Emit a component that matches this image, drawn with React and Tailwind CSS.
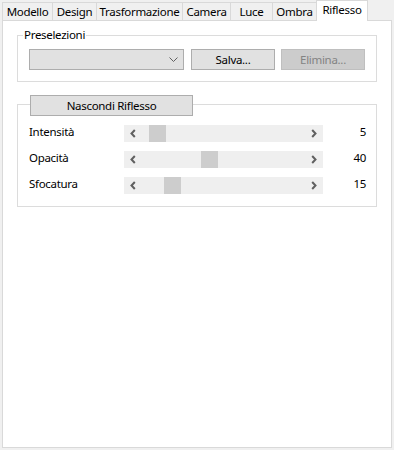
import React from "react";

const tabs = ["Modello", "Design", "Trasformazione", "Camera", "Luce", "Ombra", "Riflesso"];
const widths = ["w-[51px]", "w-[45px]", "w-[87px]", "w-[49px]", "w-[43px]", "w-[45px]", "w-[52px]"];

function Chev({ dir }) {
  return (
    <svg width="6" height="9" viewBox="0 0 6 9" className="shrink-0">
      {dir === "left" ? (
        <polyline points="4.8,1 1.5,4.5 4.8,8" fill="none" stroke="#606060" strokeWidth="2" />
      ) : (
        <polyline points="1.2,1 4.5,4.5 1.2,8" fill="none" stroke="#606060" strokeWidth="2" />
      )}
    </svg>
  );
}

function Slider({ pos }) {
  return (
    <div className="w-[199px] h-[17px] bg-[#efefef] flex items-center px-[6px] relative">
      <Chev dir="left" />
      <div className="flex-1" />
      <Chev dir="right" />
      <div className="absolute top-0 h-[17px] w-[17px] bg-[#cdcdcd]" style={{ left: pos }} />
    </div>
  );
}

export default function App() {
  const rows = [
    ["Intensità", 25, "5"],
    ["Opacità", 77, "40"],
    ["Sfocatura", 40, "15"],
  ];
  return (
    <div
      className="w-[394px] h-[450px] bg-[#f0f0f0] text-[11.5px] tracking-[-0.3px] text-black flex flex-col"
      style={{ fontFamily: '"Noto Sans", "Liberation Sans", sans-serif' }}
    >
      <div className="flex items-end h-[20px] pl-[2px]">
        {tabs.map((t, i) => {
          const sel = i === tabs.length - 1;
          return (
            <div
              key={t}
              className={
                (i > 0 ? "-ml-px " : "") +
                widths[i] +
                (sel
                  ? " h-[21px] -mb-px bg-white relative z-10 border border-b-0 border-[#d9d9d9] flex items-center justify-center pb-[3px]"
                  : " h-[18px] bg-[#f0f0f0] border border-b-0 border-[#d9d9d9] flex items-center justify-center")
              }
            >
              <span className="leading-[16px]">{t}</span>
            </div>
          );
        })}
      </div>
      <div className="mx-[2px] h-[428px] border border-[#d9d9d9] bg-white px-[14px] pt-[14px]">
        <div className="relative h-[47px] border border-[#dcdcdc] pl-[11px] pt-[13px] flex gap-[7px]">
          <div className="absolute -top-[9px] left-[5px] px-[1px] bg-white leading-[16px]">
            Preselezioni
          </div>
          <div className="w-[155px] h-[21px] bg-[#e1e1e1] border border-[#adadad] flex items-center justify-end pr-[5px]">
            <svg width="9" height="6" viewBox="0 0 9 6">
              <polyline points="0.5,0.5 4.5,4.5 8.5,0.5" fill="none" stroke="#606060" strokeWidth="1" />
            </svg>
          </div>
          <div className="w-[84px] h-[21px] bg-[#e1e1e1] border border-[#adadad] flex items-center justify-center leading-[16px]">
            Salva...
          </div>
          <div className="ml-[-1px] w-[84px] h-[21px] bg-[#cccccc] border border-[#bfbfbf] text-[#838383] flex items-center justify-center leading-[16px]">
            Elimina...
          </div>
        </div>
        <div className="relative mt-[22px] h-[103px] border border-[#dcdcdc] pt-[20px] flex flex-col gap-[9px]">
          <div className="absolute -top-[10px] left-[12px] w-[163px] h-[21px] bg-[#e1e1e1] border border-[#adadad] flex items-center justify-center leading-[16px]">
            Nascondi Riflesso
          </div>
          {rows.map(([l, p, v]) => (
            <div key={l} className="flex items-center h-[17px] pl-[11px]">
              <div className="w-[95px] leading-[16px] pb-[3px]">{l}</div>
              <Slider pos={p} />
              <div className="flex-1 text-right pr-[10px] leading-[16px] pb-[3px]">{v}</div>
            </div>
          ))}
        </div>
      </div>
    </div>
  );
}
